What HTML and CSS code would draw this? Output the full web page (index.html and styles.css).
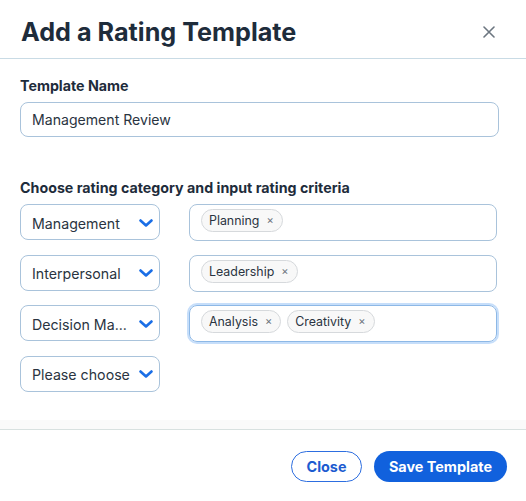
FILE: index.html
```html
<!DOCTYPE html>
<html lang="en">
<head>
<meta charset="utf-8">
<title>Add a Rating Template</title>
<link rel="stylesheet" href="styles.css">
</head>
<body>
<div class="dialog">
  <header class="dialog-header">
    <h1 class="dialog-title">Add a Rating Template</h1>
    <button class="icon-close" aria-label="Close">
      <svg width="12" height="12" viewBox="0 0 12 12"><path d="M1 1L11 11M11 1L1 11" stroke="#6c7680" stroke-width="1.6" fill="none" stroke-linecap="round"/></svg>
    </button>
  </header>
  <main class="dialog-body">
    <label class="field-label">Template Name</label>
    <div class="text-input">Management Review</div>

    <label class="field-label section-label">Choose rating category and input rating criteria</label>
    <div class="rows">
      <div class="row">
        <div class="select"><span class="select-text">Management</span><svg class="chev" width="14" height="8" viewBox="0 0 14 8"><path d="M1.5 1.5L7 6.5L12.5 1.5" stroke="#1a6ee6" stroke-width="2.6" fill="none" stroke-linecap="round" stroke-linejoin="round"/></svg></div>
        <div class="tags"><span class="chip">Planning<span class="chip-x">×</span></span></div>
      </div>
      <div class="row">
        <div class="select"><span class="select-text">Interpersonal</span><svg class="chev" width="14" height="8" viewBox="0 0 14 8"><path d="M1.5 1.5L7 6.5L12.5 1.5" stroke="#1a6ee6" stroke-width="2.6" fill="none" stroke-linecap="round" stroke-linejoin="round"/></svg></div>
        <div class="tags"><span class="chip">Leadership<span class="chip-x">×</span></span></div>
      </div>
      <div class="row">
        <div class="select"><span class="select-text">Decision Ma...</span><svg class="chev" width="14" height="8" viewBox="0 0 14 8"><path d="M1.5 1.5L7 6.5L12.5 1.5" stroke="#1a6ee6" stroke-width="2.6" fill="none" stroke-linecap="round" stroke-linejoin="round"/></svg></div>
        <div class="tags focused"><span class="chip">Analysis<span class="chip-x">×</span></span><span class="chip">Creativity<span class="chip-x">×</span></span></div>
      </div>
      <div class="row">
        <div class="select"><span class="select-text">Please choose</span><svg class="chev" width="14" height="8" viewBox="0 0 14 8"><path d="M1.5 1.5L7 6.5L12.5 1.5" stroke="#1a6ee6" stroke-width="2.6" fill="none" stroke-linecap="round" stroke-linejoin="round"/></svg></div>
      </div>
    </div>
  </main>
  <footer class="dialog-footer">
    <button class="btn btn-outline">Close</button>
    <button class="btn btn-primary">Save Template</button>
  </footer>
</div>
</body>
</html>
```
FILE: styles.css
```css
* { box-sizing: border-box; }
html, body { margin: 0; padding: 0; background: #fff; }
body {
  font-family: Inter, "Noto Sans", "Liberation Sans", sans-serif;
  color: #1e2c3b;
}
.dialog {
  display: flex;
  flex-direction: column;
  height: 501px;
}
.dialog-header {
  height: 59px;
  display: flex;
  align-items: flex-start;
  justify-content: space-between;
  padding: 16px 31px 0 21px;
  border-bottom: 1px solid #c9dbe5;
}
.dialog-title {
  margin: 0;
  font-size: 25.2px;
  line-height: 32px;
  font-weight: 700;
  color: #1e2c3b;
}
.icon-close {
  border: 0;
  background: none;
  padding: 0;
  margin-top: 10px;
  width: 12px;
  height: 12px;
  display: flex;
}
.dialog-body {
  flex: 1;
  padding: 17px 27px 0 20px;
  display: flex;
  flex-direction: column;
}
.field-label {
  display: block;
  font-size: 14.25px;
  line-height: 20px;
  font-weight: 700;
  color: #1e2c3b;
  margin-bottom: 6px;
}
.section-label { margin-top: 41px; }
.text-input {
  height: 35px;
  border: 1px solid #a9c3db;
  border-radius: 8px;
  padding: 0 11px;
  display: flex;
  align-items: center;
  font-size: 14.1px;
  color: #2a3441;
}
.rows {
  display: flex;
  flex-direction: column;
  gap: 13.6px;
}
.row {
  display: flex;
  align-items: flex-start;
  gap: 29px;
  height: 37px;
}
.select {
  width: 140px;
  height: 36px;
  border: 1px solid #a9c3db;
  border-radius: 8px;
  display: flex;
  align-items: center;
  justify-content: space-between;
  padding: 2px 6px 0 11px;
  font-size: 14.2px;
  color: #2a3441;
  white-space: nowrap;
}
.chev { flex: none; margin-top: -1px; }
.tags {
  width: 308px;
  height: 37px;
  margin-right: 2px;
  border: 1px solid #a9c3db;
  border-radius: 8px;
  display: flex;
  align-items: flex-start;
  gap: 6px;
  padding: 4px 11px 0;
}
.tags.focused {
  border-color: #8db8e6;
  box-shadow: 0 0 0 2px #c6defa;
}
.chip {
  height: 23px;
  display: inline-flex;
  align-items: center;
  gap: 7px;
  padding: 0 8px 0 7px;
  border: 1px solid #d6d9dc;
  border-radius: 12px;
  background: #f8f8f8;
  font-size: 12.4px;
  color: #2a3441;
}
.chip-x {
  font-size: 11px;
  color: #6a727b;
  line-height: 1;
}
.dialog-footer {
  height: 72px;
  border-top: 1px solid #d8e1e0;
  box-shadow: 0 -9px 0 #fafafa;
  display: flex;
  justify-content: flex-end;
  align-items: flex-start;
  gap: 12px;
  padding: 21px 19px 0 0;
}
.btn {
  height: 31px;
  border-radius: 16px;
  font-family: inherit;
  font-size: 14.4px;
  font-weight: 700;
  padding: 0;
}
.btn-outline {
  width: 71px;
  background: #fff;
  border: 1.5px solid #2d6ee0;
  color: #1d5bd0;
}
.btn-primary {
  width: 133px;
  background: #1161dd;
  border: 0;
  color: #fff;
}
```
